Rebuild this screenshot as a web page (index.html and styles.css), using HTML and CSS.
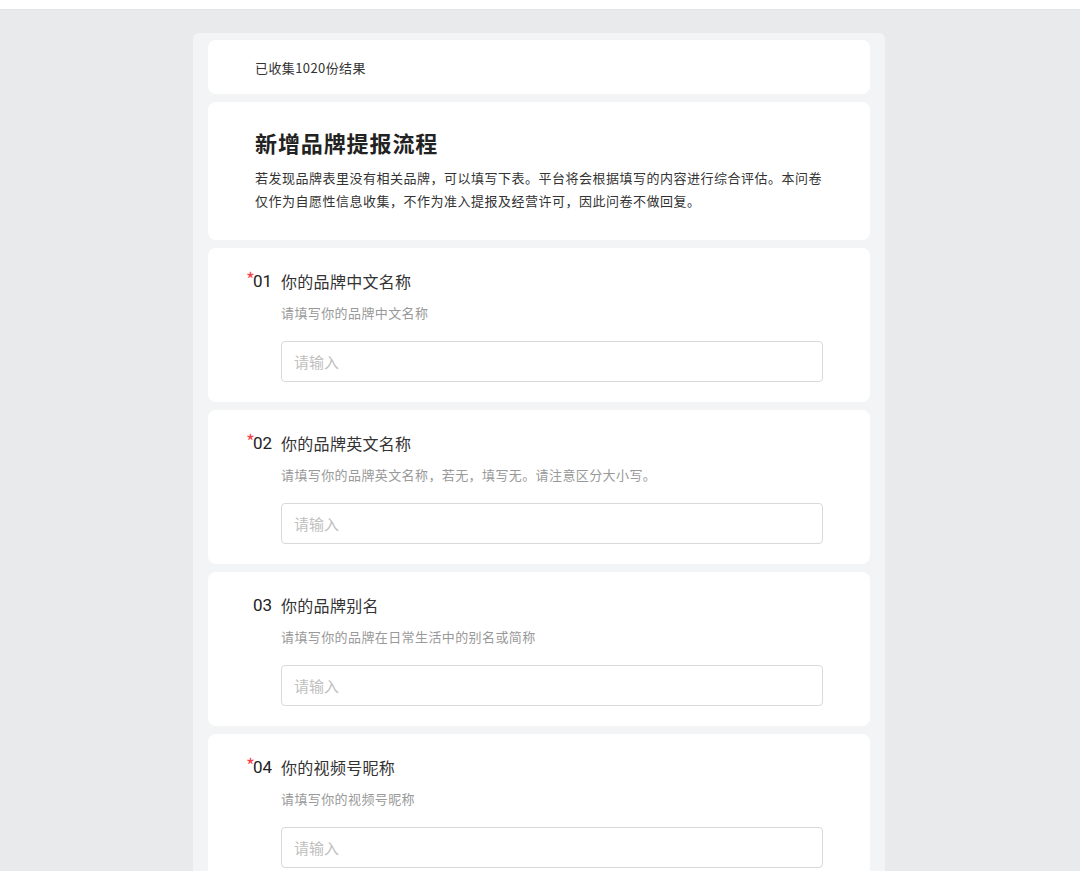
FILE: index.html
```html
<!DOCTYPE html>
<html lang="zh-CN">
<head>
<meta charset="utf-8">
<title>新增品牌提报流程</title>
<link rel="stylesheet" href="styles.css">
</head>
<body>
<div class="topbar"></div>
<main class="page">
  <div class="sheet">
    <div class="card count-card">已收集1020份结果</div>
    <div class="card intro-card">
      <h1 class="title">新增品牌提报流程</h1>
      <p class="desc">若发现品牌表里没有相关品牌，可以填写下表。平台将会根据填写的内容进行综合评估。本问卷仅作为自愿性信息收集，不作为准入提报及经营许可，因此问卷不做回复。</p>
    </div>
    <div class="card q-card">
      <div class="q-head"><span class="req">*</span><span class="q-num">01</span><span class="q-label">你的品牌中文名称</span></div>
      <div class="q-hint">请填写你的品牌中文名称</div>
      <div class="q-input">请输入</div>
    </div>
    <div class="card q-card">
      <div class="q-head"><span class="req">*</span><span class="q-num">02</span><span class="q-label">你的品牌英文名称</span></div>
      <div class="q-hint">请填写你的品牌英文名称，若无，填写无。请注意区分大小写。</div>
      <div class="q-input">请输入</div>
    </div>
    <div class="card q-card">
      <div class="q-head"><span class="req blank"></span><span class="q-num">03</span><span class="q-label">你的品牌别名</span></div>
      <div class="q-hint">请填写你的品牌在日常生活中的别名或简称</div>
      <div class="q-input">请输入</div>
    </div>
    <div class="card q-card">
      <div class="q-head"><span class="req">*</span><span class="q-num">04</span><span class="q-label">你的视频号昵称</span></div>
      <div class="q-hint">请填写你的视频号昵称</div>
      <div class="q-input">请输入</div>
    </div>
  </div>
</main>
</body>
</html>
```
FILE: styles.css
```css
* { box-sizing: border-box; }
html, body { margin: 0; padding: 0; }
body {
  background: #e9eaec;
  font-family: "Noto Sans CJK SC", "Noto Sans", sans-serif;
  color: #333;
  height: 871px;
  overflow: hidden;
}
.topbar {
  height: 10px;
  background: #fff;
  border-bottom: 1px solid #e3e4e6;
}
.page {
  display: flex;
  justify-content: center;
  padding-top: 23px;
  padding-right: 2px;
}
.sheet {
  width: 692px;
  background: #f3f4f6;
  border-radius: 6px;
  padding: 7px 15px 0;
  display: flex;
  flex-direction: column;
  gap: 8px;
}
.card {
  background: #fff;
  border-radius: 8px;
  padding: 0 47px;
}
.count-card {
  height: 54px;
  display: flex;
  align-items: center;
  font-size: 13px;
  letter-spacing: 0.4px;
  color: #333;
}
.intro-card {
  padding-top: 25px;
  padding-bottom: 28px;
}
.title {
  margin: 0;
  font-size: 22px;
  line-height: 30px;
  font-weight: 700;
  letter-spacing: 0.9px;
  color: #222;
}
.desc {
  margin: 9px 0 0;
  font-size: 13px;
  line-height: 23px;
  letter-spacing: 0.5px;
  color: #333;
}
.q-card {
  padding-top: 22px;
  padding-bottom: 20px;
  height: 154px;
}
.q-head {
  display: flex;
  align-items: center;
  height: 22px;
  margin-left: -9px;
}
.req {
  width: 8px;
  color: #f5414a;
  font-size: 19px;
  line-height: 16px;
  align-self: flex-start;
  margin-top: 1px;
  margin-right: -1px;
}
.q-num {
  font-family: "Roboto", "Liberation Sans", sans-serif;
  font-size: 17px;
  color: #222;
  width: 28px;
}
.q-label {
  font-size: 16px;
  letter-spacing: 0.3px;
  color: #333;
}
.q-hint {
  margin-top: 11px;
  margin-left: 26px;
  font-size: 13px;
  line-height: 20px;
  letter-spacing: 0.4px;
  color: #999;
}
.q-input {
  margin-top: 18px;
  margin-left: 26px;
  height: 41px;
  border: 1px solid #d9d9d9;
  border-radius: 4px;
  padding: 0 12px;
  display: flex;
  align-items: center;
  font-size: 15px;
  color: #bfbfbf;
}
```
